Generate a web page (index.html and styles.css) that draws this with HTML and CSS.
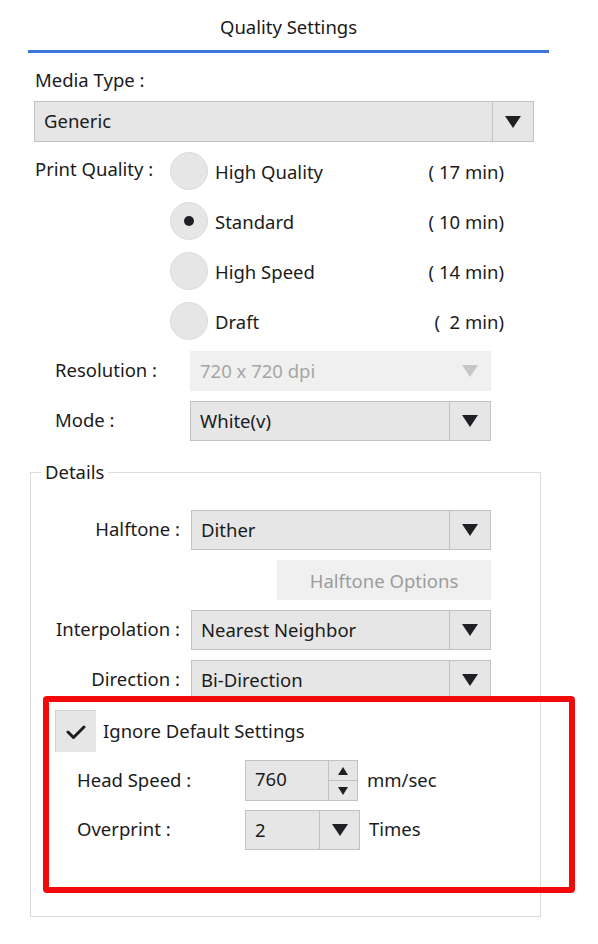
FILE: index.html
```html
<!DOCTYPE html>
<html lang="en">
<head>
    <meta charset="UTF-8">
    <meta name="viewport" content="width=device-width, initial-scale=1.0">
    <title>Quality Settings</title>
    <link rel="stylesheet" href="styles.css">
</head>
<body>

<div class="tab">
    <div class="tab-title">Quality Settings</div>
</div>

<div class="main">
    <div class="field-label">Media Type :</div>
    <div class="select select-wide">
        <span class="select-value">Generic</span>
        <span class="select-btn"><span class="caret"></span></span>
    </div>

    <div class="quality">
        <div class="quality-label">Print Quality :</div>
        <div class="quality-options">
            <div class="option">
                <span class="radio"></span>
                <span class="option-name">High Quality</span>
                <span class="option-time">( 17 min)</span>
            </div>
            <div class="option">
                <span class="radio checked"></span>
                <span class="option-name">Standard</span>
                <span class="option-time">( 10 min)</span>
            </div>
            <div class="option">
                <span class="radio"></span>
                <span class="option-name">High Speed</span>
                <span class="option-time">( 14 min)</span>
            </div>
            <div class="option">
                <span class="radio"></span>
                <span class="option-name">Draft</span>
                <span class="option-time">( &nbsp;2 min)</span>
            </div>
        </div>
    </div>

    <div class="form-row first">
        <span class="row-label">Resolution :</span>
        <div class="select select-mid disabled">
            <span class="select-value">720 x 720 dpi</span>
            <span class="select-btn"><span class="caret"></span></span>
        </div>
    </div>
    <div class="form-row">
        <span class="row-label">Mode :</span>
        <div class="select select-mid">
            <span class="select-value">White(v)</span>
            <span class="select-btn"><span class="caret"></span></span>
        </div>
    </div>
</div>

<fieldset class="details">
    <legend>Details</legend>

    <div class="detail-row first">
        <span class="detail-label">Halftone :</span>
        <div class="select select-detail">
            <span class="select-value">Dither</span>
            <span class="select-btn"><span class="caret"></span></span>
        </div>
    </div>
    <div class="options-row">
        <button class="options-btn" disabled>Halftone Options</button>
    </div>
    <div class="detail-row">
        <span class="detail-label">Interpolation :</span>
        <div class="select select-detail">
            <span class="select-value">Nearest Neighbor</span>
            <span class="select-btn"><span class="caret"></span></span>
        </div>
    </div>
    <div class="detail-row">
        <span class="detail-label">Direction :</span>
        <div class="select select-detail">
            <span class="select-value">Bi-Direction</span>
            <span class="select-btn"><span class="caret"></span></span>
        </div>
    </div>

    <div class="highlight">
        <div class="check-row">
            <span class="checkbox">
                <svg width="20" height="16" viewBox="0 0 20 16">
                    <polyline points="2,8 7.5,13.5 18,3" fill="none" stroke="#1d1d1d" stroke-width="3" stroke-linecap="round" stroke-linejoin="round"/>
                </svg>
            </span>
            <span class="check-text">Ignore Default Settings</span>
        </div>
        <div class="value-row">
            <span class="value-label">Head Speed :</span>
            <div class="spin">
                <span class="spin-value">760</span>
                <span class="spin-btns">
                    <span class="spin-btn"><span class="caret-up"></span></span>
                    <span class="spin-btn"><span class="caret-down"></span></span>
                </span>
            </div>
            <span class="unit">mm/sec</span>
        </div>
        <div class="value-row second">
            <span class="value-label">Overprint :</span>
            <div class="select select-small">
                <span class="select-value">2</span>
                <span class="select-btn"><span class="caret"></span></span>
            </div>
            <span class="unit">Times</span>
        </div>
    </div>
</fieldset>

</body>
</html>
```

FILE: styles.css
```css
body {
    margin: 0;
    background-color: #ffffff;
    color: #1b1b1b;
    font-family: 'Noto Sans', 'Open Sans', sans-serif;
    font-size: 18.5px;
}

/* tab header */
.tab {
    margin-left: 28px;
    width: 521px;
    border-bottom: 3px solid #3b75d9;
}

.tab-title {
    height: 50px;
    padding-top: 14px;
    box-sizing: border-box;
    line-height: 26px;
    text-align: center;
}

.main {
    padding-left: 34px;
    width: 500px;
}

.field-label {
    margin-top: 15px;
    padding-left: 1px;
    line-height: 24px;
}

/* combo boxes */
.select {
    display: flex;
    height: 40px;
    box-sizing: border-box;
    background-color: #e6e6e6;
    border: 1px solid #c2c2c2;
}

.select-value {
    flex: 1;
    padding-left: 9px;
    line-height: 38px;
    white-space: nowrap;
}

.select-btn {
    width: 40px;
    display: flex;
    align-items: center;
    justify-content: center;
    border-left: 1px solid #c2c2c2;
}

.caret {
    width: 0;
    height: 0;
    border-left: 8px solid transparent;
    border-right: 8px solid transparent;
    border-top: 12px solid #1f1f24;
}

.select-wide {
    margin-top: 9px;
    width: 500px;
    height: 41px;
}

.select-mid {
    width: 301px;
}

.select.disabled {
    background-color: #f0f0f0;
    border-color: #f0f0f0;
    color: #a6a6a6;
}

.select.disabled .select-btn {
    border-left-color: #f0f0f0;
}

.select.disabled .caret {
    border-top-color: #c6c6c6;
}

/* print quality radios */
.quality {
    display: flex;
    margin-top: 4px;
}

.quality-label {
    width: 135px;
    padding-left: 1px;
    line-height: 46px;
}

.quality-options {
    width: 334px;
}

.option {
    display: flex;
    align-items: center;
    height: 50px;
}

.radio {
    width: 38px;
    height: 38px;
    box-sizing: border-box;
    border-radius: 50%;
    background-color: #e6e6e6;
    border: 1px solid #dcdcdc;
    display: flex;
    align-items: center;
    justify-content: center;
}

.radio.checked::after {
    content: '';
    width: 10px;
    height: 10px;
    border-radius: 50%;
    background-color: #1e1f29;
}

.option-name {
    flex: 1;
    margin-left: 7px;
}

.option-time {
    white-space: pre;
}

.form-row {
    display: flex;
    align-items: center;
    margin-top: 10px;
    padding-left: 21px;
}

.form-row.first {
    margin-top: 5px;
}

.row-label {
    width: 135px;
    margin-top: -4px;
}

/* details group */
.details {
    margin: 19px 0 0 30px;
    padding: 26px 0 23px 0;
    width: 511px;
    min-width: 0;
    box-sizing: border-box;
    border: 1px solid #dcdcdc;
}

.details legend {
    margin-left: 10px;
    padding: 0 4px;
    line-height: 24px;
}

.detail-row {
    display: flex;
    align-items: center;
    margin-top: 10px;
}

.detail-row.first {
    margin-top: 0;
}

.detail-label {
    width: 149px;
    margin: -4px 11px 0 0;
    text-align: right;
}

.select-detail {
    width: 300px;
}

.options-row {
    margin: 10px 0 0 246px;
}

.options-btn {
    width: 214px;
    height: 40px;
    border: none;
    background-color: #f0f0f0;
    color: #9c9c9c;
    font-family: inherit;
    font-size: 18.5px;
}

/* red highlight over the override settings */
.highlight {
    position: relative;
    margin: -4px 0 0 12px;
    width: 532px;
    height: 197px;
    box-sizing: border-box;
    border: 6px solid #f20a0a;
    border-radius: 4px;
}

.check-row {
    display: flex;
    align-items: center;
    margin: 8px 0 0 6px;
}

.checkbox {
    width: 41px;
    height: 42px;
    box-sizing: border-box;
    background-color: #e6e6e6;
    border-left: 1px solid #d0d0d0;
    border-top: 1px solid #d0d0d0;
    display: flex;
    align-items: center;
    justify-content: center;
}

.check-text {
    margin-left: 7px;
    margin-top: -2px;
}

.value-row {
    display: flex;
    align-items: center;
    margin: 8px 0 0 28px;
}

.value-row.second {
    margin-top: 9px;
}

.value-label {
    width: 168px;
    margin-top: -3px;
}

.spin {
    display: flex;
    width: 113px;
    height: 41px;
    box-sizing: border-box;
    background-color: #e6e6e6;
    border: 1px solid #c2c2c2;
}

.spin-value {
    flex: 1;
    padding-left: 9px;
    line-height: 36px;
}

.spin-btns {
    width: 28px;
    display: flex;
    flex-direction: column;
    border-left: 1px solid #c2c2c2;
}

.spin-btn {
    flex: 1;
    display: flex;
    align-items: center;
    justify-content: center;
}

.spin-btn + .spin-btn {
    border-top: 1px solid #c2c2c2;
}

.caret-up {
    width: 0;
    height: 0;
    border-left: 5px solid transparent;
    border-right: 5px solid transparent;
    border-bottom: 8px solid #1f1f24;
}

.caret-down {
    width: 0;
    height: 0;
    border-left: 5px solid transparent;
    border-right: 5px solid transparent;
    border-top: 8px solid #1f1f24;
}

.select-small {
    width: 115px;
}

.select-small .select-btn {
    width: 39px;
}

.unit {
    margin-left: 9px;
    margin-top: -3px;
}
```
